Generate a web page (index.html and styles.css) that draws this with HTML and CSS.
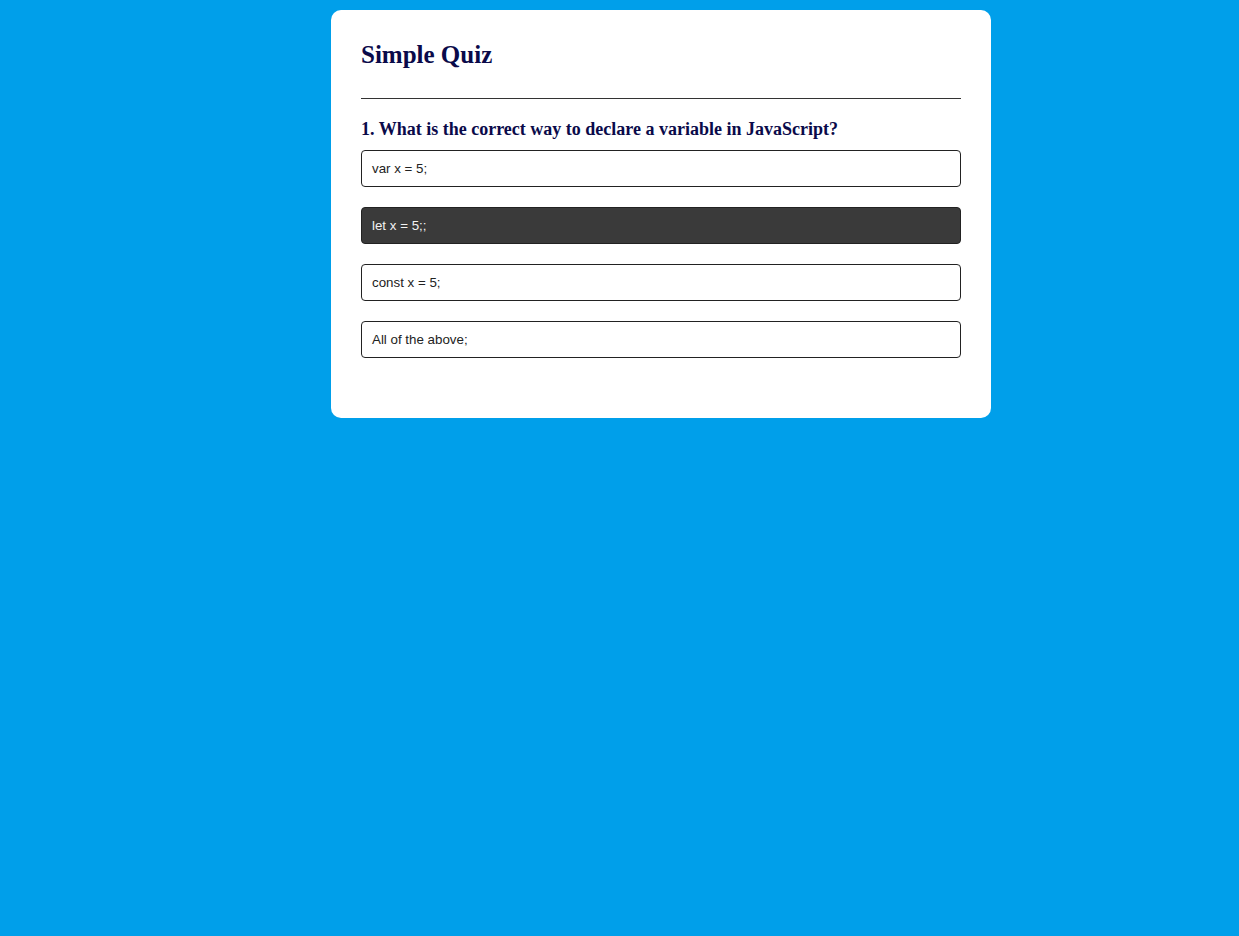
FILE: index.html
```html
<!DOCTYPE html>
<html>
<head>
<meta charset="utf-8">
<link rel="stylesheet" href="styles.css">
</head>
<body>
<div class="card">
  <h1 class="title">Simple Quiz</h1>
  <hr class="rule">
  <h2 class="question">1. What is the correct way to declare a variable in JavaScript?</h2>
  <div class="options">
    <div class="option">var x = 5;</div>
    <div class="option selected">let x = 5;;</div>
    <div class="option">const x = 5;</div>
    <div class="option">All of the above;</div>
  </div>
</div>
</body>
</html>
```
FILE: styles.css
```css
html, body {
  margin: 0;
  padding: 0;
}
body {
  background: #009fea;
  min-height: 936px;
  padding-top: 10px;
  box-sizing: border-box;
}
.card {
  width: 660px;
  box-sizing: border-box;
  margin: 0 0 0 331px;
  background: #fff;
  border-radius: 10px;
  padding: 30px 30px 60px;
}
.title {
  font-family: "Liberation Serif", serif;
  font-size: 25px;
  line-height: 30px;
  font-weight: bold;
  color: #0a0a4a;
  margin: 0;
}
.rule {
  border: none;
  border-top: 1px solid #333;
  margin: 28px 0 0;
  height: 0;
}
.question {
  font-family: "Liberation Serif", serif;
  font-size: 18px;
  line-height: 21px;
  font-weight: bold;
  color: #0a0a4a;
  margin: 20px 0 10px;
}
.options {
  display: flex;
  flex-direction: column;
  gap: 20px;
}
.option {
  font-family: "Liberation Sans", Arial, sans-serif;
  font-size: 13.333px;
  line-height: 15px;
  color: #222;
  border: 1px solid #222;
  border-radius: 4px;
  padding: 10px 10px;
  background: #fff;
}
.option.selected {
  background: #3a3a3a;
  color: #f2f2f2;
}
```
